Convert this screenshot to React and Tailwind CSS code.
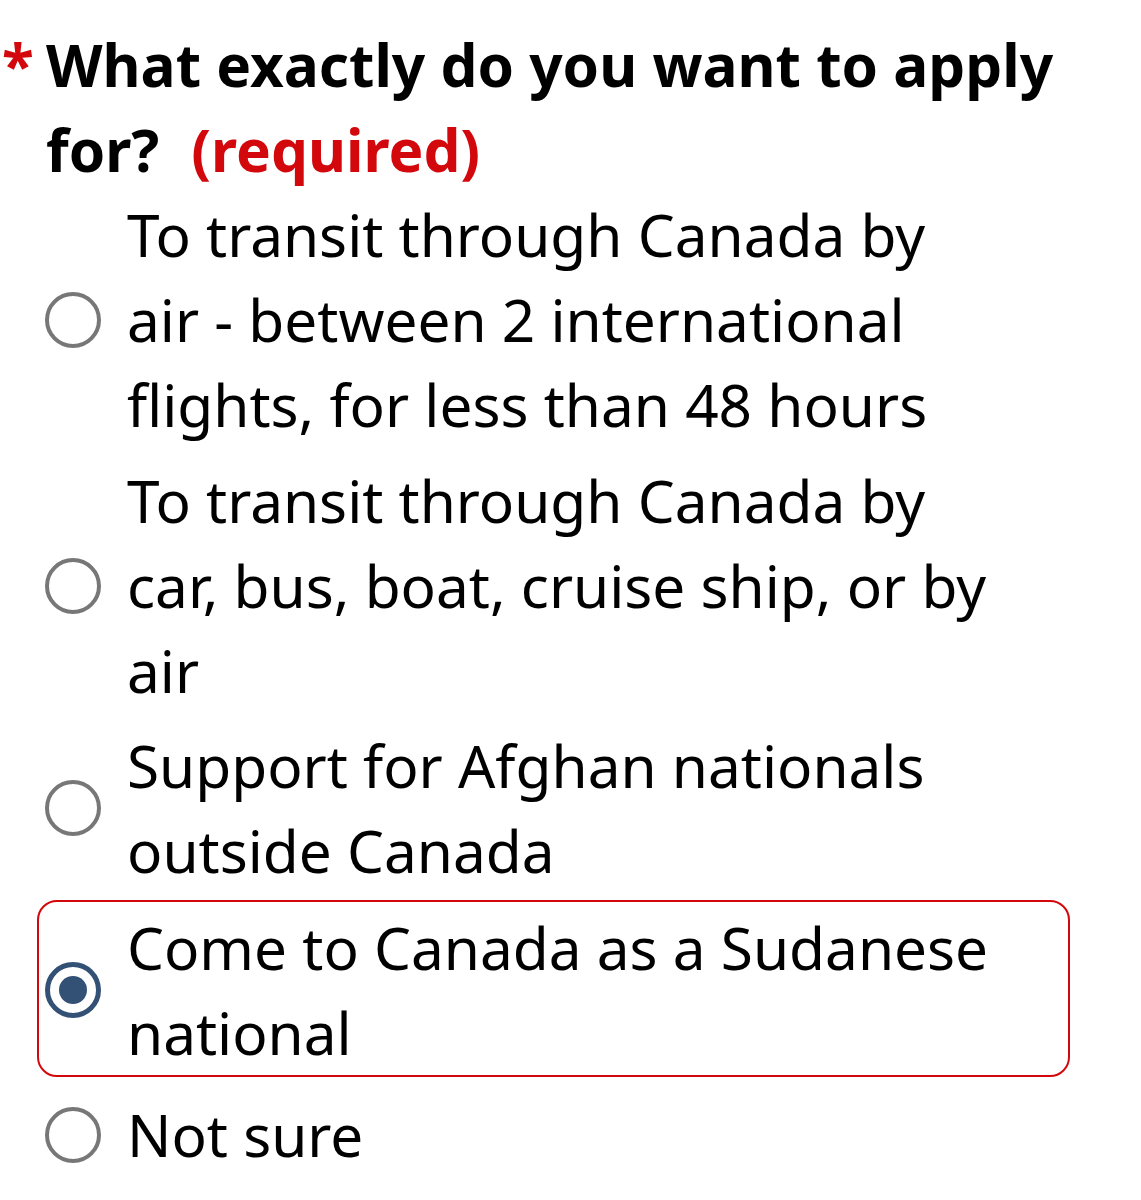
import React from "react";

function Radio({ checked }) {
  if (checked) {
    return (
      <svg width="58" height="58" viewBox="0 0 58 58" className="shrink-0">
        <circle cx="29" cy="29" r="25.5" fill="white" stroke="#335075" strokeWidth="5" />
        <circle cx="29" cy="29" r="14" fill="#335075" />
      </svg>
    );
  }
  return (
    <svg width="58" height="58" viewBox="0 0 58 58" className="shrink-0">
      <circle cx="29" cy="29" r="26" fill="white" stroke="#777777" strokeWidth="4" />
    </svg>
  );
}

function Option({ label, checked, className = "" }) {
  return (
    <label className={`flex items-center ${className}`}>
      <Radio checked={checked} />
      <span className="ml-[25px] w-[880px] text-black">{label}</span>
    </label>
  );
}

export default function App() {
  return (
    <div
      className="bg-white w-[1141px] h-[1200px] overflow-hidden pt-[22px] text-[58.5px] leading-[85px]"
      style={{ fontFamily: "'Noto Sans', 'Open Sans', sans-serif" }}
    >
      <div className="flex font-bold text-black">
        <span className="w-[46px] shrink-0 text-[#d3080c] pl-[2px]">*</span>
        <span className="w-[1080px]">
          What exactly do you want to apply for?
          <span className="ml-[32px] text-[#d3080c]">(required)</span>
        </span>
      </div>
      <div className="flex flex-col">
        <Option
          className="pl-[44px] mb-[11px]"
          label="To transit through Canada by air - between 2 international flights, for less than 48 hours"
        />
        <Option
          className="pl-[44px] mb-[10px]"
          label="To transit through Canada by car, bus, boat, cruise ship, or by air"
        />
        <Option
          className="pl-[44px] mb-[7px]"
          label="Support for Afghan nationals outside Canada"
        />
        <div className="ml-[37px] w-[1033px] border-2 border-[#d3080c] rounded-[20px] pt-[3px] pb-[0px] pl-[5px] mb-[15px]">
          <Option checked label="Come to Canada as a Sudanese national" />
        </div>
        <Option className="pl-[44px]" label="Not sure" />
      </div>
    </div>
  );
}
